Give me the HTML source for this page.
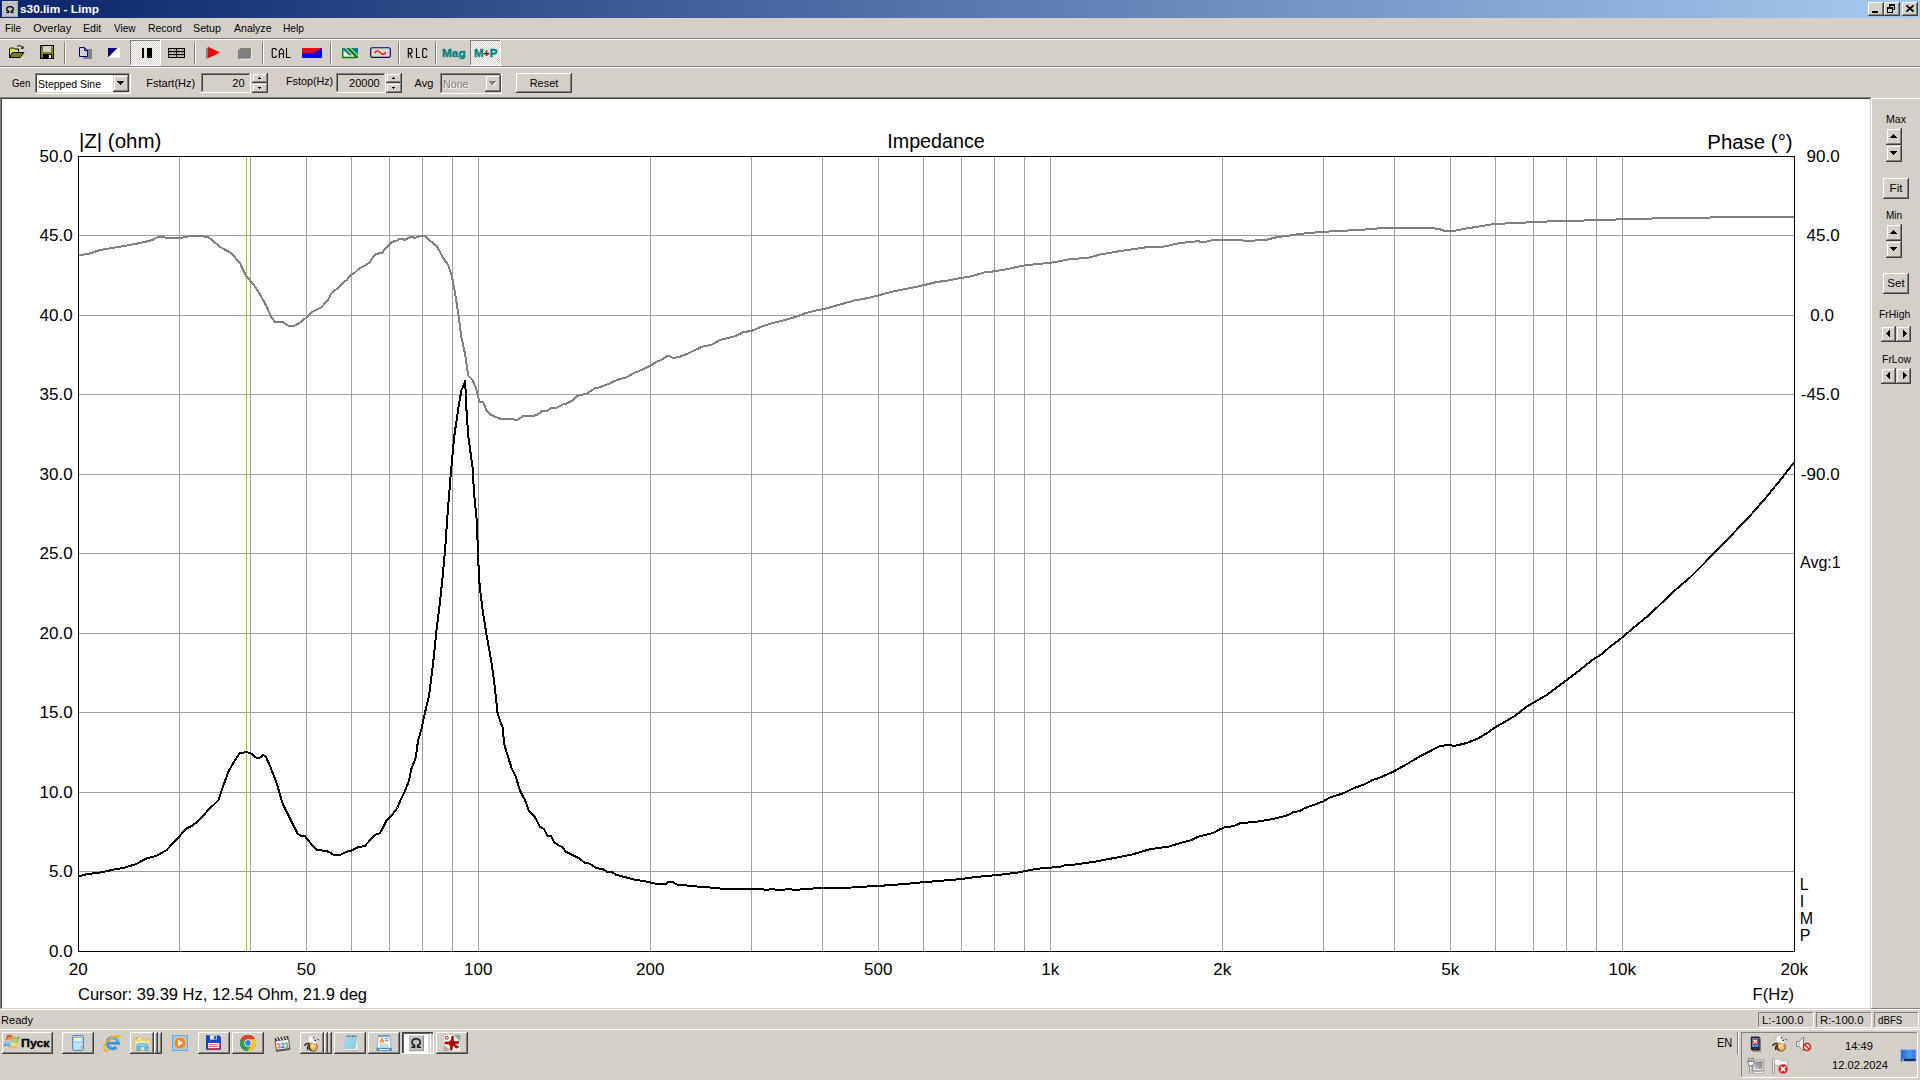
<!DOCTYPE html>
<html><head><meta charset="utf-8"><title>s30.lim - Limp</title>
<style>
html,body{margin:0;padding:0;}
body{width:1920px;height:1080px;overflow:hidden;background:#d4d0c8;position:relative;font-family:"Liberation Sans",sans-serif;}
.a{position:absolute;box-sizing:border-box;}
.t{position:absolute;white-space:pre;line-height:1;font-family:"Liberation Sans",sans-serif;}
svg{position:absolute;left:0;top:0;overflow:visible;}
</style></head>
<body>
<div class="a " style="left:0px;top:0px;width:1920px;height:18px;background:linear-gradient(to right,#0a246a,#a6caf0);"></div>
<div class="a " style="left:2px;top:1px;width:16px;height:16px;background:#c0c0c0;box-shadow:inset 1px 1px #d0d0d0,inset -1px -1px #a8a8a8;"><svg width="16" height="16" viewBox="0 0 16 16"><path d="M4.300 11.300h2.300v-1.200c-1.300-.5-1.900-1.200-1.900-2.200 0-1.400 1.400-2.300 3.300-2.300s3.300 .9 3.300 2.300c0 1-.6 1.700-1.900 2.200v1.200h2.300" fill="none" stroke="#000" stroke-width="1.350"/></svg></div>
<div class="a " style="left:1868px;top:2px;width:16px;height:14px;background:#d4d0c8;box-shadow:inset -1px -1px #404040,inset 1px 1px #fff,inset -2px -2px #808080,inset 2px 2px #d4d0c8;"><div class="a" style="left:4px;top:9px;width:6px;height:2px;background:#000"></div></div>
<div class="a " style="left:1884px;top:2px;width:16px;height:14px;background:#d4d0c8;box-shadow:inset -1px -1px #404040,inset 1px 1px #fff,inset -2px -2px #808080,inset 2px 2px #d4d0c8;"><div class="a" style="left:5px;top:2px;width:6px;height:2px;background:#000"></div><div class="a" style="left:5px;top:4px;width:1px;height:2px;background:#000"></div><div class="a" style="left:10px;top:4px;width:1px;height:4px;background:#000"></div><div class="a" style="left:9px;top:7px;width:2px;height:1px;background:#000"></div><div class="a" style="left:3px;top:5px;width:6px;height:2px;background:#000"></div><div class="a" style="left:3px;top:7px;width:1px;height:4px;background:#000"></div><div class="a" style="left:8px;top:7px;width:1px;height:4px;background:#000"></div><div class="a" style="left:3px;top:10px;width:6px;height:1px;background:#000"></div></div>
<div class="a " style="left:1902px;top:2px;width:16px;height:14px;background:#d4d0c8;box-shadow:inset -1px -1px #404040,inset 1px 1px #fff,inset -2px -2px #808080,inset 2px 2px #d4d0c8;"><svg width="16" height="14"><path d="M4.400 3.400l7.200 6.200M11.600 3.400l-7.200 6.200" stroke="#000" stroke-width="1.800"/></svg></div>
<div class="a " style="left:0px;top:38px;width:1920px;height:1px;background:#808080;"></div>
<div class="a " style="left:0px;top:39px;width:1920px;height:1px;background:#fff;"></div>
<div class="a " style="left:0px;top:66px;width:1920px;height:1px;background:#808080;"></div>
<div class="a " style="left:0px;top:67px;width:1920px;height:1px;background:#fff;"></div>
<div class="a " style="left:64px;top:42px;width:1px;height:22px;background:#808080;"></div>
<div class="a " style="left:65px;top:42px;width:1px;height:22px;background:#fff;"></div>
<div class="a " style="left:194px;top:42px;width:1px;height:22px;background:#808080;"></div>
<div class="a " style="left:195px;top:42px;width:1px;height:22px;background:#fff;"></div>
<div class="a " style="left:262px;top:42px;width:1px;height:22px;background:#808080;"></div>
<div class="a " style="left:263px;top:42px;width:1px;height:22px;background:#fff;"></div>
<div class="a " style="left:330px;top:42px;width:1px;height:22px;background:#808080;"></div>
<div class="a " style="left:331px;top:42px;width:1px;height:22px;background:#fff;"></div>
<div class="a " style="left:398px;top:42px;width:1px;height:22px;background:#808080;"></div>
<div class="a " style="left:399px;top:42px;width:1px;height:22px;background:#fff;"></div>
<div class="a " style="left:435px;top:42px;width:1px;height:22px;background:#808080;"></div>
<div class="a " style="left:436px;top:42px;width:1px;height:22px;background:#fff;"></div>
<svg class="a" style="left:8px;top:44px" width="18" height="16" viewBox="0 0 18 16" ><path d="M1.500 13.500v-8.500l1-1h3l1 1h4v2.500" fill="#e0e040" stroke="#000"/><path d="M2 6h8v2h-8z" fill="#c0f040"/><path d="M1.500 13.500l3-5h11.500l-4 5z" fill="#808000" stroke="#000"/><path d="M9 2.500c1.800-1.400 4.500-1.200 5.500 1.200" fill="none" stroke="#000"/><path d="M12.500 4.800h3v-3z" fill="#000"/></svg>
<svg class="a" style="left:40px;top:45px" width="15" height="15" viewBox="0 0 15 15" ><rect x=".5" y=".5" width="13" height="13" fill="#808000" stroke="#000"/><rect x="3" y="1" width="8" height="6" fill="#d4d0c8"/><rect x="3" y="9" width="9" height="4.500" fill="#000"/><rect x="9" y="10" width="2" height="3" fill="#e8e8e8"/><rect x="11.800" y="1.300" width="1.200" height="1.200" fill="#d4d0c8"/></svg>
<svg class="a" style="left:78px;top:46px" width="15" height="14" viewBox="0 0 15 14" ><rect x="5.300" y="3" width="8.700" height="10" fill="#808080"/><path d="M1.500 1.500h5l3 3v6h-8z" fill="#d4d0c8" stroke="#000080"/><path d="M6.500 1.500v3h3" fill="none" stroke="#000080"/></svg>
<svg class="a" style="left:108px;top:48px" width="12" height="10" viewBox="0 0 12 10" ><rect x="0" y="0" width="12" height="9.700" fill="#fff"/><path d="M0 0h9.500l-9.500 9.500z" fill="#000080"/></svg>
<div class="a " style="left:130px;top:40px;width:31px;height:26px;background-image:conic-gradient(#fff 25%,#d4d0c8 0 50%,#fff 0 75%,#d4d0c8 0);background-size:2px 2px;box-shadow:inset -1px -1px #fff,inset 1px 1px #808080;"></div>
<div class="a " style="left:142px;top:48px;width:2px;height:10px;background:#000"></div>
<div class="a " style="left:147px;top:48px;width:5px;height:10px;background:#000"></div>
<svg class="a" style="left:168px;top:48px" width="17" height="10" viewBox="0 0 17 10" ><rect x="0" y="0" width="17" height="10" fill="#000"/><g fill="#efe9d9"><rect x="1" y="1.300" width="7" height="1.500"/><rect x="9" y="1.300" width="7" height="1.500"/><rect x="1" y="4.300" width="7" height="1.500"/><rect x="9" y="4.300" width="7" height="1.500"/><rect x="1" y="7.300" width="7" height="1.500"/><rect x="9" y="7.300" width="7" height="1.500"/></g><g fill="#c8c2b0"><rect x="4" y="1" width="1" height="8"/><rect x="12" y="1" width="1" height="8"/></g><g fill="#000"><rect x="0" y="3" width="17" height="1"/><rect x="0" y="6" width="17" height="1"/></g></svg>
<svg class="a" style="left:205px;top:46px" width="17" height="14" viewBox="0 0 17 14" ><path d="M1 3l2-2v10.500l9-4.500v1l-9.500 4.500h-1.500z" fill="#808080"/><path d="M3 .8l12 5.700l-12 5.700z" fill="#f00"/></svg>
<svg class="a" style="left:237px;top:47px" width="15" height="14" viewBox="0 0 15 14" ><path d="M4.200 2.200h10.400v9.400l-1 1h-10.400v-9z" fill="#fff"/><path d="M3.500 1h10.500v9.500l-1.200 1.200h-11.800v-8.500z" fill="#808080"/></svg>
<svg class="a" style="left:271px;top:47px" width="22" height="13" viewBox="0 0 22 13" ><g fill="none" stroke="#000" stroke-width="1.100" stroke-linejoin="miter"><path d="M5.200 3.500v-1l-1-1h-2l-1 1v7l1 1h2l1-1v-1"/><path d="M8.300 11v-7l2.100-2.500l2.100 2.500v7M8.300 6.800h4.200"/><path d="M15.500 1v9.500h4"/></g></svg>
<svg class="a" style="left:407px;top:47px" width="22" height="13" viewBox="0 0 22 13" ><g fill="none" stroke="#000" stroke-width="1.100" stroke-linejoin="miter"><path d="M1.300 11v-9.500h2.700l1 1v2.600l-1 1h-2.700M2.900 6.600l2.300 4.400"/><path d="M9.500 1v9.500h3.600"/><path d="M19.700 3.500v-1l-1-1h-2l-1 1v7l1 1h2l1-1v-1"/></g></svg>
<svg class="a" style="left:302px;top:48px" width="20" height="10" viewBox="0 0 20 10" ><rect x="0" y="0" width="20" height="10" fill="#00f"/><path d="M0 0h20l-8.500 5h-11.500z" fill="#f00"/></svg>
<svg class="a" style="left:342px;top:48px" width="17" height="11" viewBox="0 0 17 11" ><path d="M0 0v10h16z" fill="#f6e4e4"/><path d="M9 0h7v7z" fill="#008080"/><path d="M0 0h2.600l7.400 7.300h-2.700l-7.300-6.300z" fill="#008080"/><path d="M4.300 0h3l8.700 8.500v1.500h-2z" fill="#008000"/><path d="M.7 1.500v8h13.500" fill="none" stroke="#008000" stroke-width="1.400"/></svg>
<svg class="a" style="left:369px;top:46px" width="23" height="13" viewBox="0 0 23 13" ><rect x="1.700" y="1.700" width="19.600" height="9.600" rx="1.500" fill="#ddd8c8" stroke="#000080" stroke-width="1.150"/><path d="M6 7.200c.8-3 3.200-3 5.200-.6s4.600 2.300 5.500-.6" fill="none" stroke="#f00" stroke-width="1.400"/></svg>
<div class="a " style="left:470px;top:40px;width:31px;height:26px;background-image:conic-gradient(#fff 25%,#d4d0c8 0 50%,#fff 0 75%,#d4d0c8 0);background-size:2px 2px;box-shadow:inset -1px -1px #fff,inset 1px 1px #808080;"></div>
<div class="a " style="left:35px;top:73px;width:96px;height:21px;background:#fff;box-shadow:inset -1px -1px #fff,inset 1px 1px #808080,inset -2px -2px #d4d0c8,inset 2px 2px #404040;"></div>
<div class="a " style="left:113px;top:75px;width:16px;height:17px;background:#d4d0c8;box-shadow:inset -1px -1px #404040,inset 1px 1px #d4d0c8,inset -2px -2px #808080,inset 2px 2px #fff;"><div class="a" style="left:4px;top:6px;width:7px;height:1px;background:#000"></div><div class="a" style="left:5px;top:7px;width:5px;height:1px;background:#000"></div><div class="a" style="left:6px;top:8px;width:3px;height:1px;background:#000"></div><div class="a" style="left:7px;top:9px;width:1px;height:1px;background:#000"></div></div>
<div class="a " style="left:201px;top:73px;width:50px;height:20px;background:#d4d0c8;box-shadow:inset -1px -1px #fff,inset 1px 1px #808080,inset -2px -2px #d4d0c8,inset 2px 2px #404040;"></div>
<div class="a " style="left:252px;top:73px;width:16px;height:10px;background:#d4d0c8;box-shadow:inset -1px -1px #404040,inset 1px 1px #d4d0c8,inset -2px -2px #808080,inset 2px 2px #fff;"><div class="a" style="left:7px;top:4px;width:1px;height:1px;background:#000"></div><div class="a" style="left:6px;top:5px;width:3px;height:1px;background:#000"></div></div>
<div class="a " style="left:252px;top:83px;width:16px;height:10px;background:#d4d0c8;box-shadow:inset -1px -1px #404040,inset 1px 1px #d4d0c8,inset -2px -2px #808080,inset 2px 2px #fff;"><div class="a" style="left:6px;top:4px;width:3px;height:1px;background:#000"></div><div class="a" style="left:7px;top:5px;width:1px;height:1px;background:#000"></div></div>
<div class="a " style="left:336px;top:73px;width:50px;height:20px;background:#d4d0c8;box-shadow:inset -1px -1px #fff,inset 1px 1px #808080,inset -2px -2px #d4d0c8,inset 2px 2px #404040;"></div>
<div class="a " style="left:386px;top:73px;width:16px;height:10px;background:#d4d0c8;box-shadow:inset -1px -1px #404040,inset 1px 1px #d4d0c8,inset -2px -2px #808080,inset 2px 2px #fff;"><div class="a" style="left:7px;top:4px;width:1px;height:1px;background:#000"></div><div class="a" style="left:6px;top:5px;width:3px;height:1px;background:#000"></div></div>
<div class="a " style="left:386px;top:83px;width:16px;height:10px;background:#d4d0c8;box-shadow:inset -1px -1px #404040,inset 1px 1px #d4d0c8,inset -2px -2px #808080,inset 2px 2px #fff;"><div class="a" style="left:6px;top:4px;width:3px;height:1px;background:#000"></div><div class="a" style="left:7px;top:5px;width:1px;height:1px;background:#000"></div></div>
<div class="a " style="left:440px;top:73px;width:62px;height:21px;background:#d4d0c8;box-shadow:inset -1px -1px #fff,inset 1px 1px #808080,inset -2px -2px #d4d0c8,inset 2px 2px #404040;"></div>
<div class="a " style="left:485px;top:75px;width:16px;height:17px;background:#d4d0c8;box-shadow:inset -1px -1px #404040,inset 1px 1px #d4d0c8,inset -2px -2px #808080,inset 2px 2px #fff;"><div class="a" style="left:5px;top:7px;width:7px;height:1px;background:#fff"></div><div class="a" style="left:6px;top:8px;width:5px;height:1px;background:#fff"></div><div class="a" style="left:7px;top:9px;width:3px;height:1px;background:#fff"></div><div class="a" style="left:8px;top:10px;width:1px;height:1px;background:#fff"></div><div class="a" style="left:4px;top:6px;width:7px;height:1px;background:#808080"></div><div class="a" style="left:5px;top:7px;width:5px;height:1px;background:#808080"></div><div class="a" style="left:6px;top:8px;width:3px;height:1px;background:#808080"></div><div class="a" style="left:7px;top:9px;width:1px;height:1px;background:#808080"></div></div>
<div class="a " style="left:516px;top:73px;width:56px;height:20px;background:#d4d0c8;box-shadow:inset -1px -1px #404040,inset 1px 1px #fff,inset -2px -2px #808080,inset 2px 2px #d4d0c8;"></div>
<div class="a " style="left:0px;top:97px;width:1871px;height:1px;background:#808080;"></div>
<div class="a " style="left:0px;top:98px;width:1871px;height:1px;background:#404040;"></div>
<div class="a " style="left:0px;top:97px;width:1px;height:912px;background:#808080;"></div>
<div class="a " style="left:1px;top:98px;width:1px;height:910px;background:#404040;"></div>
<div class="a " style="left:2px;top:99px;width:1868px;height:909px;background:#fff;"></div>
<div class="a " style="left:1px;top:1008px;width:1870px;height:1px;background:#d4d0c8;"></div>
<div class="a " style="left:0px;top:1009px;width:1920px;height:1px;background:#fff;"></div>
<div class="a " style="left:1870px;top:98px;width:50px;height:911px;background:#d4d0c8;"></div>
<div class="a " style="left:1871px;top:98px;width:49px;height:1px;background:#fff;"></div>
<div class="a " style="left:1871px;top:98px;width:1px;height:910px;background:#fff;"></div>
<div class="a " style="left:1871px;top:1008px;width:49px;height:1px;background:#808080;"></div>
<div class="a " style="left:1886px;top:128px;width:16px;height:17px;background:#d4d0c8;box-shadow:inset -1px -1px #404040,inset 1px 1px #d4d0c8,inset -2px -2px #808080,inset 2px 2px #fff;"><div class="a" style="left:7px;top:6px;width:1px;height:1px;background:#000"></div><div class="a" style="left:6px;top:7px;width:3px;height:1px;background:#000"></div><div class="a" style="left:5px;top:8px;width:5px;height:1px;background:#000"></div><div class="a" style="left:4px;top:9px;width:7px;height:1px;background:#000"></div></div>
<div class="a " style="left:1886px;top:145px;width:16px;height:17px;background:#d4d0c8;box-shadow:inset -1px -1px #404040,inset 1px 1px #d4d0c8,inset -2px -2px #808080,inset 2px 2px #fff;"><div class="a" style="left:4px;top:6px;width:7px;height:1px;background:#000"></div><div class="a" style="left:5px;top:7px;width:5px;height:1px;background:#000"></div><div class="a" style="left:6px;top:8px;width:3px;height:1px;background:#000"></div><div class="a" style="left:7px;top:9px;width:1px;height:1px;background:#000"></div></div>
<div class="a " style="left:1883px;top:178px;width:26px;height:21px;background:#d4d0c8;box-shadow:inset -1px -1px #404040,inset 1px 1px #fff,inset -2px -2px #808080,inset 2px 2px #d4d0c8;"></div>
<div class="a " style="left:1886px;top:224px;width:16px;height:17px;background:#d4d0c8;box-shadow:inset -1px -1px #404040,inset 1px 1px #d4d0c8,inset -2px -2px #808080,inset 2px 2px #fff;"><div class="a" style="left:7px;top:6px;width:1px;height:1px;background:#000"></div><div class="a" style="left:6px;top:7px;width:3px;height:1px;background:#000"></div><div class="a" style="left:5px;top:8px;width:5px;height:1px;background:#000"></div><div class="a" style="left:4px;top:9px;width:7px;height:1px;background:#000"></div></div>
<div class="a " style="left:1886px;top:241px;width:16px;height:17px;background:#d4d0c8;box-shadow:inset -1px -1px #404040,inset 1px 1px #d4d0c8,inset -2px -2px #808080,inset 2px 2px #fff;"><div class="a" style="left:4px;top:6px;width:7px;height:1px;background:#000"></div><div class="a" style="left:5px;top:7px;width:5px;height:1px;background:#000"></div><div class="a" style="left:6px;top:8px;width:3px;height:1px;background:#000"></div><div class="a" style="left:7px;top:9px;width:1px;height:1px;background:#000"></div></div>
<div class="a " style="left:1883px;top:273px;width:26px;height:21px;background:#d4d0c8;box-shadow:inset -1px -1px #404040,inset 1px 1px #fff,inset -2px -2px #808080,inset 2px 2px #d4d0c8;"></div>
<div class="a " style="left:1881px;top:326px;width:15px;height:16px;background:#d4d0c8;box-shadow:inset -1px -1px #404040,inset 1px 1px #d4d0c8,inset -2px -2px #808080,inset 2px 2px #fff;"><div class="a" style="left:5px;top:7px;width:1px;height:1px;background:#000"></div><div class="a" style="left:6px;top:6px;width:1px;height:3px;background:#000"></div><div class="a" style="left:7px;top:5px;width:1px;height:5px;background:#000"></div><div class="a" style="left:8px;top:4px;width:1px;height:7px;background:#000"></div></div>
<div class="a " style="left:1896px;top:326px;width:15px;height:16px;background:#d4d0c8;box-shadow:inset -1px -1px #404040,inset 1px 1px #d4d0c8,inset -2px -2px #808080,inset 2px 2px #fff;"><div class="a" style="left:7px;top:4px;width:1px;height:7px;background:#000"></div><div class="a" style="left:8px;top:5px;width:1px;height:5px;background:#000"></div><div class="a" style="left:9px;top:6px;width:1px;height:3px;background:#000"></div><div class="a" style="left:10px;top:7px;width:1px;height:1px;background:#000"></div></div>
<div class="a " style="left:1881px;top:368px;width:15px;height:16px;background:#d4d0c8;box-shadow:inset -1px -1px #404040,inset 1px 1px #d4d0c8,inset -2px -2px #808080,inset 2px 2px #fff;"><div class="a" style="left:5px;top:7px;width:1px;height:1px;background:#000"></div><div class="a" style="left:6px;top:6px;width:1px;height:3px;background:#000"></div><div class="a" style="left:7px;top:5px;width:1px;height:5px;background:#000"></div><div class="a" style="left:8px;top:4px;width:1px;height:7px;background:#000"></div></div>
<div class="a " style="left:1896px;top:368px;width:15px;height:16px;background:#d4d0c8;box-shadow:inset -1px -1px #404040,inset 1px 1px #d4d0c8,inset -2px -2px #808080,inset 2px 2px #fff;"><div class="a" style="left:7px;top:4px;width:1px;height:7px;background:#000"></div><div class="a" style="left:8px;top:5px;width:1px;height:5px;background:#000"></div><div class="a" style="left:9px;top:6px;width:1px;height:3px;background:#000"></div><div class="a" style="left:10px;top:7px;width:1px;height:1px;background:#000"></div></div>
<div class="a " style="left:1758px;top:1012px;width:56px;height:16px;box-shadow:inset -1px -1px #fff,inset 1px 1px #808080;"></div>
<div class="a " style="left:1816px;top:1012px;width:56px;height:16px;box-shadow:inset -1px -1px #fff,inset 1px 1px #808080;"></div>
<div class="a " style="left:1874px;top:1012px;width:45px;height:16px;box-shadow:inset -1px -1px #fff,inset 1px 1px #808080;"></div>
<svg width="1920" height="1080" viewBox="0 0 1920 1080"><g fill="#a0a0a0" shape-rendering="crispEdges"><rect x="179" y="156" width="1" height="795"/><rect x="250" y="156" width="1" height="795"/><rect x="306" y="156" width="1" height="795"/><rect x="351" y="156" width="1" height="795"/><rect x="389" y="156" width="1" height="795"/><rect x="422" y="156" width="1" height="795"/><rect x="452" y="156" width="1" height="795"/><rect x="478" y="156" width="1" height="795"/><rect x="650" y="156" width="1" height="795"/><rect x="751" y="156" width="1" height="795"/><rect x="822" y="156" width="1" height="795"/><rect x="878" y="156" width="1" height="795"/><rect x="923" y="156" width="1" height="795"/><rect x="961" y="156" width="1" height="795"/><rect x="994" y="156" width="1" height="795"/><rect x="1024" y="156" width="1" height="795"/><rect x="1050" y="156" width="1" height="795"/><rect x="1222" y="156" width="1" height="795"/><rect x="1323" y="156" width="1" height="795"/><rect x="1394" y="156" width="1" height="795"/><rect x="1450" y="156" width="1" height="795"/><rect x="1495" y="156" width="1" height="795"/><rect x="1533" y="156" width="1" height="795"/><rect x="1566" y="156" width="1" height="795"/><rect x="1596" y="156" width="1" height="795"/><rect x="1622" y="156" width="1" height="795"/><rect x="78" y="235" width="1716" height="1"/><rect x="78" y="315" width="1716" height="1"/><rect x="78" y="394" width="1716" height="1"/><rect x="78" y="474" width="1716" height="1"/><rect x="78" y="553" width="1716" height="1"/><rect x="78" y="633" width="1716" height="1"/><rect x="78" y="712" width="1716" height="1"/><rect x="78" y="792" width="1716" height="1"/><rect x="78" y="871" width="1716" height="1"/></g><rect x="246" y="156" width="1" height="795" fill="#c0c000" shape-rendering="crispEdges"/><polyline points="78.5,255.2 88.8,253.8 100.0,250.0 111.2,248.1 127.5,245.4 141.2,242.8 152.5,240.0 158.1,236.9 163.8,236.9 166.2,237.9 181.2,237.9 190.0,236.2 202.5,236.0 208.8,237.5 220.0,246.9 231.2,253.1 240.0,263.1 246.2,276.2 253.8,285.0 260.0,294.4 266.2,305.6 271.2,316.9 275.0,321.9 282.5,321.9 288.1,325.6 295.0,325.6 300.0,322.5 306.9,316.9 312.5,311.9 321.2,307.5 328.1,300.0 331.9,292.5 336.2,289.4 344.4,281.2 346.9,280.0 350.0,275.6 354.4,273.1 358.8,268.8 363.8,266.2 369.4,262.5 374.4,255.0 377.5,253.8 382.5,252.5 386.2,247.5 391.9,241.9 396.9,240.6 400.0,238.8 405.0,239.8 410.6,236.9 415.0,237.8 420.0,236.0 425.0,236.0 430.6,241.2 436.9,246.2 442.5,256.9 448.1,265.0 451.9,276.2 455.0,292.5 458.1,312.5 461.2,336.2 465.0,353.8 468.1,375.6 472.5,380.0 476.2,388.8 479.4,401.9 483.1,401.9 486.2,410.0 491.2,415.0 500.0,418.8 512.5,418.8 515.0,420.0 517.5,419.8 523.1,416.2 532.5,416.0 537.5,414.8 541.9,411.0 546.9,410.8 551.2,407.9 556.2,407.8 563.1,404.4 566.9,403.4 572.5,400.4 576.9,396.0 587.5,393.4 595.0,388.1 599.4,387.5 605.0,385.0 609.4,383.8 614.4,381.0 620.0,379.0 626.2,377.5 633.1,373.4 640.0,370.6 650.6,365.6 656.2,361.9 661.2,360.0 668.1,355.6 672.5,357.8 675.0,357.8 681.7,356.2 690.0,352.5 695.0,350.0 702.5,346.7 711.7,344.7 720.0,340.0 735.0,336.3 743.3,332.2 751.7,330.8 760.8,327.0 770.0,323.8 785.0,320.0 797.5,316.3 805.8,313.0 818.3,310.0 825.0,308.8 838.3,305.0 855.0,300.3 866.7,298.3 878.3,295.5 886.7,293.0 900.0,290.0 913.3,287.5 923.3,285.3 936.7,282.0 948.3,280.5 961.7,277.8 971.7,276.3 985.0,272.2 990.0,271.9 1004.2,269.7 1025.0,265.3 1050.8,262.8 1070.0,259.2 1088.3,257.8 1100.0,254.5 1121.7,250.8 1146.7,247.2 1163.3,246.7 1180.0,243.0 1198.3,241.2 1201.7,242.0 1205.8,241.7 1213.3,240.0 1241.7,240.0 1244.2,241.2 1252.5,241.2 1256.7,240.0 1266.7,239.7 1276.7,237.2 1288.3,235.8 1300.0,233.9 1306.7,233.3 1320.0,232.0 1335.0,231.2 1351.7,230.3 1368.3,229.3 1383.3,228.0 1428.3,227.8 1438.3,228.8 1445.0,231.0 1453.3,231.0 1466.7,228.3 1478.3,226.7 1495.0,223.8 1511.7,223.3 1531.7,222.2 1551.7,221.3 1583.3,220.7 1586.7,220.0 1610.0,219.8 1622.5,219.2 1673.3,218.0 1733.3,217.2 1794.0,216.7" fill="none" stroke="#808080" stroke-width="2" stroke-linejoin="round" stroke-linecap="butt" shape-rendering="crispEdges"/><polyline points="78.7,876.3 86.7,874.2 100.0,872.5 113.3,869.7 125.0,867.5 135.8,864.2 146.7,858.3 156.7,855.8 166.7,850.0 176.7,839.2 186.7,828.3 193.3,825.0 200.0,819.2 208.3,810.0 218.3,800.3 223.3,785.8 228.3,771.7 235.0,760.0 240.0,753.0 246.7,752.2 250.8,753.3 256.7,758.0 260.0,757.5 263.3,755.0 265.8,756.7 270.0,765.8 276.7,783.3 282.5,803.3 290.0,818.3 297.5,833.3 300.8,835.8 305.0,836.3 310.0,842.5 316.7,850.0 325.0,850.8 329.2,852.0 333.3,854.7 340.8,854.7 346.7,851.7 351.7,850.5 358.3,847.2 365.0,845.8 375.0,834.7 380.0,833.3 386.7,820.0 390.8,816.7 397.5,807.5 400.8,799.2 405.0,790.8 408.7,781.7 411.3,769.2 415.8,757.5 418.0,740.8 421.7,728.3 423.3,720.0 429.2,695.0 433.3,661.7 436.7,628.3 440.0,601.7 442.5,578.3 445.0,551.0 447.5,515.0 450.8,473.3 454.2,436.7 458.3,408.3 461.3,390.8 465.3,380.8 465.8,400.0 468.3,436.7 472.5,466.7 474.2,495.0 476.7,520.0 477.8,547.0 478.3,561.7 479.7,586.7 483.3,615.0 486.7,635.8 490.8,658.3 494.2,681.7 497.5,712.5 500.4,722.0 502.5,726.7 504.2,744.2 507.5,755.0 511.7,768.3 515.8,776.7 520.0,790.8 525.0,800.0 528.8,810.8 534.2,815.8 540.0,826.7 544.2,829.2 547.2,835.5 550.8,835.8 554.2,842.5 562.5,847.5 565.8,851.7 580.0,858.7 584.2,862.5 590.0,863.7 596.7,868.3 602.5,868.8 606.7,871.7 611.7,872.0 615.8,874.7 623.3,876.7 635.0,879.7 646.7,881.7 656.7,883.8 665.8,883.8 668.3,882.0 672.5,882.0 676.7,884.5 685.0,885.3 693.3,886.3 705.0,887.0 723.3,888.8 761.7,889.2 766.7,890.0 771.7,888.8 776.7,890.0 790.0,889.2 795.0,890.0 806.7,888.8 823.3,888.0 851.7,887.5 871.7,886.2 888.3,885.3 906.7,883.8 923.3,882.2 940.0,880.8 960.0,879.2 978.3,876.7 995.0,875.3 1005.0,874.2 1020.0,872.2 1036.7,868.8 1060.8,866.7 1065.0,865.0 1073.3,864.7 1095.0,861.7 1116.7,857.5 1133.3,854.2 1150.0,849.2 1168.3,846.7 1183.3,842.2 1191.7,840.0 1198.3,836.7 1213.3,833.0 1218.3,830.0 1225.0,827.2 1233.3,826.3 1240.0,823.3 1256.7,821.7 1270.0,819.5 1281.7,817.0 1288.3,815.0 1293.3,812.2 1300.0,810.8 1305.0,808.0 1312.0,805.5 1322.5,801.7 1330.0,797.5 1343.3,793.3 1354.2,788.0 1365.0,784.2 1372.5,780.0 1378.3,778.3 1393.3,771.7 1406.7,764.2 1420.0,756.3 1430.0,751.3 1438.3,746.7 1446.7,745.0 1455.0,745.8 1466.7,743.0 1478.3,738.3 1486.7,733.3 1495.0,727.5 1505.0,721.7 1515.0,715.8 1526.7,706.7 1536.7,700.8 1546.7,695.0 1556.7,687.5 1566.7,680.0 1576.7,672.5 1593.3,659.2 1601.7,654.2 1610.0,646.7 1619.2,640.0 1630.8,630.0 1650.0,614.2 1673.3,591.7 1690.0,577.5 1705.0,562.5 1716.7,550.0 1733.3,533.3 1750.0,515.8 1766.7,496.7 1781.7,478.3 1794.0,462.5" fill="none" stroke="#000" stroke-width="2" stroke-linejoin="round" stroke-linecap="butt" shape-rendering="crispEdges"/><g fill="#000" shape-rendering="crispEdges"><rect x="78" y="156" width="1717" height="1"/><rect x="78" y="951" width="1717" height="1"/><rect x="78" y="156" width="1" height="796"/><rect x="1794" y="156" width="1" height="796"/></g></svg>
<div class="a " style="left:0px;top:1029px;width:1920px;height:1px;background:#fff;"></div>
<div class="a " style="left:2px;top:1032px;width:51px;height:22px;background:#d4d0c8;box-shadow:inset -1px -1px #404040,inset 1px 1px #fff,inset -2px -2px #808080,inset 2px 2px #d4d0c8;"></div>
<svg class="a" style="left:4px;top:1034px" width="17" height="16" viewBox="0 0 17 16" ><defs><radialGradient id="fr" cx=".6" cy=".7" r=".8"><stop offset="0" stop-color="#ffb040"/><stop offset="1" stop-color="#d83018"/></radialGradient><radialGradient id="fg" cx=".4" cy=".6" r=".8"><stop offset="0" stop-color="#c8e878"/><stop offset="1" stop-color="#489820"/></radialGradient><radialGradient id="fb" cx=".6" cy=".3" r=".8"><stop offset="0" stop-color="#b8dcf8"/><stop offset="1" stop-color="#2870c8"/></radialGradient><radialGradient id="fy" cx=".4" cy=".3" r=".8"><stop offset="0" stop-color="#fff080"/><stop offset="1" stop-color="#f0a010"/></radialGradient></defs><path d="M2.800 1.600c2.200-1.200 4.200-.9 5.900.4l-1.400 4.900c-1.700-1.200-3.700-1.500-5.900-.3z" fill="url(#fr)"/><path d="M9.700 2.600c1.800 1.200 3.800 1.300 6 .0l-1.400 4.900c-2.200 1.300-4.200 1.200-6-.0z" fill="url(#fg)"/><path d="M1.100 7.700c2.200-1.200 4.200-.9 5.900.4l-1.400 4.800c-1.700-1.300-3.700-1.600-5.900-.4z" fill="url(#fb)"/><path d="M8 8.700c1.800 1.200 3.800 1.300 6 .0l-1.400 4.800c-2.200 1.300-4.200 1.200-6-.0z" fill="url(#fy)"/></svg>
<div class="a " style="left:62px;top:1032px;width:32px;height:22px;background:#d4d0c8;box-shadow:inset -1px -1px #404040,inset 1px 1px #fff,inset -2px -2px #808080,inset 2px 2px #d4d0c8;"></div>
<div class="a " style="left:154px;top:1032px;width:8px;height:22px;background:#d4d0c8;box-shadow:inset -1px -1px #404040,inset 1px 1px #fff,inset -2px -2px #808080,inset 2px 2px #d4d0c8;"></div>
<div class="a " style="left:154px;top:1032px;width:4px;height:22px;background:#d4d0c8;box-shadow:inset -1px -1px #404040,inset 1px 1px #fff,inset -2px -2px #808080,inset 2px 2px #d4d0c8;"></div>
<div class="a " style="left:130px;top:1032px;width:24px;height:22px;background:#d4d0c8;box-shadow:inset -1px -1px #404040,inset 1px 1px #fff,inset -2px -2px #808080,inset 2px 2px #d4d0c8;"></div>
<div class="a " style="left:198px;top:1032px;width:32px;height:22px;background:#d4d0c8;box-shadow:inset -1px -1px #404040,inset 1px 1px #fff,inset -2px -2px #808080,inset 2px 2px #d4d0c8;"></div>
<div class="a " style="left:232px;top:1032px;width:32px;height:22px;background:#d4d0c8;box-shadow:inset -1px -1px #404040,inset 1px 1px #fff,inset -2px -2px #808080,inset 2px 2px #d4d0c8;"></div>
<div class="a " style="left:324px;top:1032px;width:8px;height:22px;background:#d4d0c8;box-shadow:inset -1px -1px #404040,inset 1px 1px #fff,inset -2px -2px #808080,inset 2px 2px #d4d0c8;"></div>
<div class="a " style="left:324px;top:1032px;width:4px;height:22px;background:#d4d0c8;box-shadow:inset -1px -1px #404040,inset 1px 1px #fff,inset -2px -2px #808080,inset 2px 2px #d4d0c8;"></div>
<div class="a " style="left:300px;top:1032px;width:24px;height:22px;background:#d4d0c8;box-shadow:inset -1px -1px #404040,inset 1px 1px #fff,inset -2px -2px #808080,inset 2px 2px #d4d0c8;"></div>
<div class="a " style="left:334px;top:1032px;width:32px;height:22px;background:#d4d0c8;box-shadow:inset -1px -1px #404040,inset 1px 1px #fff,inset -2px -2px #808080,inset 2px 2px #d4d0c8;"></div>
<div class="a " style="left:368px;top:1032px;width:32px;height:22px;background:#d4d0c8;box-shadow:inset -1px -1px #404040,inset 1px 1px #fff,inset -2px -2px #808080,inset 2px 2px #d4d0c8;"></div>
<div class="a " style="left:436px;top:1032px;width:32px;height:22px;background:#d4d0c8;box-shadow:inset -1px -1px #404040,inset 1px 1px #fff,inset -2px -2px #808080,inset 2px 2px #d4d0c8;"></div>
<div class="a " style="left:402px;top:1032px;width:32px;height:22px;background:#fff;box-shadow:inset -1px -1px #fff,inset 1px 1px #404040,inset 2px 2px #606060;"></div>
<div class="a " style="left:429px;top:1034px;width:5px;height:19px;background:#d4d0c8;"></div>
<div class="a " style="left:430px;top:1033px;width:1px;height:20px;background:#fff;"></div>
<div class="a " style="left:433px;top:1033px;width:1px;height:21px;background:#fff;"></div>
<div class="a " style="left:428px;top:1034px;width:1px;height:19px;background:#e8e4dc;"></div>
<div class="a " style="left:430px;top:1032px;width:3px;height:1px;background:#404040;"></div>
<div class="a " style="left:431px;top:1033px;width:2px;height:1px;background:#606060;"></div>
<svg class="a" style="left:72px;top:1035px" width="12" height="16" viewBox="0 0 12 16" ><rect x=".5" y=".5" width="11" height="15" rx="1.200" fill="#a8d4f8" stroke="#4c90d4"/><rect x="2" y="2.700" width="8" height="3.800" fill="#e8f4ff" stroke="#88bcec" stroke-width=".5"/><rect x="2" y="2" width="8" height=".9" fill="#f8a030"/><g fill="#f4faff"><rect x="2.200" y="8.400" width="1.200" height="1.200"/><rect x="4.300" y="8.400" width="1.200" height="1.200"/><rect x="6.400" y="8.400" width="1.200" height="1.200"/><rect x="8.500" y="8.400" width="1.200" height="1.200"/><rect x="3.200" y="10.500" width="1.200" height="1.200"/><rect x="5.300" y="10.500" width="1.200" height="1.200"/><rect x="7.400" y="10.500" width="1.200" height="1.200"/><rect x="3.200" y="12.600" width="1.200" height="1.200"/><rect x="5.300" y="12.600" width="1.200" height="1.200"/><rect x="7.400" y="12.600" width="1.200" height="1.200"/></g><rect x="9" y="11" width="1.200" height="3" fill="#f89020"/></svg>
<svg class="a" style="left:103px;top:1034px" width="18" height="18" viewBox="0 0 18 18" ><defs><linearGradient id="ieg" x1="0" y1="0" x2="0" y2="1"><stop offset="0" stop-color="#58b4f0"/><stop offset=".5" stop-color="#2890e0"/><stop offset="1" stop-color="#3ca0e8"/></linearGradient></defs><circle cx="9.600" cy="9.200" r="5.500" fill="none" stroke="url(#ieg)" stroke-width="3.300" stroke-dasharray="30.700 3.860" transform="rotate(47 9.600 9.200)"/><rect x="4.200" y="8.100" width="12.400" height="2.400" fill="#2c94e4"/><path d="M2.300 16.700C-.8 14 2 8 8 4.200C12 1.600 16.600 .8 17 3.200" fill="none" stroke="#f4b400" stroke-width="1.700" stroke-linecap="round"/><path d="M2.300 16.700c1 .6 2.200 .4 3-.1" fill="none" stroke="#f0a800" stroke-width="1.300" stroke-linecap="round"/></svg>
<svg class="a" style="left:134px;top:1036px" width="17" height="16" viewBox="0 0 17 16" ><path d="M.8 2.300c0-.5.400-.9.900-.9h4.300l1 1.600h8.200c.4 0 .8.400.8.800v9.400c0 .5-.4.900-.9.900h-13.400c-.5 0-.9-.4-.9-.9z" fill="#f0d47c" stroke="#d8b850" stroke-width=".7"/><rect x="2" y="1.900" width="1.500" height="1" fill="#38c020"/><rect x="3.800" y="1.900" width="3" height="1" fill="#fff"/><path d="M1.200 5h14.400v8.600h-14.400z" fill="#f8e8a8"/><path d="M2.700 14.600v-5.300c0-1 .6-1.600 1.500-1.600h8.600c.9 0 1.500.6 1.500 1.600v5.300h-3.600v-3c0-.5-.3-.8-.8-.8h-2.800c-.5 0-.8.300-.8.800v3z" fill="#58b8f0" stroke="#48a0e0" stroke-width=".5"/><path d="M3.500 8.500h10v1.500h-10z" fill="#a8e0fc" opacity=".7"/></svg>
<svg class="a" style="left:172px;top:1035px" width="16" height="16" viewBox="0 0 16 16" ><rect x=".5" y=".5" width="15" height="15" fill="#9cccf4" stroke="#68a8e4"/><circle cx="8" cy="8" r="5.800" fill="#f48a18"/><circle cx="8" cy="8" r="5.800" fill="none" stroke="#fcb868" stroke-width=".8"/><path d="M6 4.800l5 3.200l-5 3.200z" fill="#fff"/></svg>
<svg class="a" style="left:206px;top:1035px" width="16" height="16" viewBox="0 0 16 16" ><defs><linearGradient id="shg" x1="0" y1="0" x2="1" y2="0"><stop offset="0" stop-color="#f8f8f8"/><stop offset="1" stop-color="#b8bcc8"/></linearGradient></defs><path d="M.3 .3h12.700l2 2v12.400h-14.700z" fill="#1848c8"/><path d="M.3 .3h1.200v14.400h-1.200z" fill="#1038a8"/><rect x="4" y=".3" width="7" height="4.300" fill="url(#shg)"/><rect x="8.300" y="1.200" width="1.700" height="2.800" fill="#1840c0"/><rect x="2" y="8" width="11.300" height="5.300" fill="#fff"/><g fill="#e03848"><rect x="3" y="9.300" width="9.300" height=".8"/><rect x="3" y="11.100" width="9.300" height=".8"/></g><rect x="2" y="13.300" width="11.300" height="1.500" fill="#c02838"/></svg>
<svg class="a" style="left:240px;top:1035px" width="16" height="16" viewBox="0 0 16 16" ><circle cx="8" cy="8" r="8" fill="#e04030"/><path d="M8 8L1.070 4a8 8 0 0 0 6.930 12z" fill="#2ca048"/><path d="M8 8L8 16a8 8 0 0 0 6.930-12z" fill="#f8c818"/><path d="M8 8L14.930 4a8 8 0 0 0 -13.860 0z" fill="#e04030"/><path d="M8 8l-3.300 1.900L1.070 4a8 8 0 0 0 6.930 12l3.400-6z" fill="#2ca048"/><path d="M8 16a8 8 0 0 0 6.930-12h-6.930l3.300 6z" fill="#f8c818"/><path d="M1.070 4a8 8 0 0 1 13.860 0h-6.930a4 4 0 0 0 -3.460 2z" fill="#e04030"/><circle cx="8" cy="8" r="3.700" fill="#fff"/><circle cx="8" cy="8" r="2.900" fill="#3880f0"/></svg>
<svg class="a" style="left:274px;top:1035px" width="17" height="17" viewBox="0 0 17 17" ><g transform="rotate(-8 8 8)"><rect x="1.500" y="5" width="13.500" height="10.500" fill="#f4f4f4" stroke="#404040" stroke-width=".8"/><rect x="1.500" y="2" width="13.500" height="3" fill="#303030"/><path d="M3 2l1.500 3M6 2l1.500 3M9 2l1.500 3M12 2l1.500 3" stroke="#fff" stroke-width="1.200"/><text x="2.300" y="13" font-family="Liberation Sans" font-weight="bold" font-size="7.500" fill="#e86020">3</text><text x="6.300" y="13" font-family="Liberation Sans" font-weight="bold" font-size="7.500" fill="#2878d8">2</text><text x="10.300" y="13" font-family="Liberation Sans" font-weight="bold" font-size="7.500" fill="#30a040">1</text><rect x="1.500" y="14" width="13.500" height="1.500" fill="#505050"/></g></svg>
<svg class="a" style="left:304px;top:1035px" width="17" height="17" viewBox="0 0 17 17" ><defs><radialGradient id="bg1" cx=".45" cy=".4" r=".7"><stop offset="0" stop-color="#f8e4b0"/><stop offset=".7" stop-color="#e0a848"/><stop offset="1" stop-color="#b07818"/></radialGradient></defs><path d="M5 8.500c-1.500-.2-3 .3-4.300 1.700M4.300 10.500c-.8 1.300-.9 2.700-.3 4.200" stroke="#181818" stroke-width="1.300" fill="none" stroke-linecap="round"/><path d="M12.800 4.600c.8-.5 1.800-.3 2.700.5" stroke="#404040" stroke-width=".8" fill="none"/><ellipse cx="9.300" cy="11.800" rx="4" ry="4.500" fill="url(#bg1)" stroke="#5c4010" stroke-width=".6" transform="rotate(-18 9.300 11.800)"/><path d="M5.300 9.500c-.7 2.500 0 4.800 2.200 6.300" stroke="#201808" stroke-width="1.200" fill="none"/><path d="M6 8.300c1.500-1.200 4-1.300 6 .2l-.7 1.300c-1.500-.9-3.300-.9-4.800-.1z" fill="#f09818"/><circle cx="7.300" cy="4.200" r="3.300" fill="#fcfcfc" stroke="#c8c8c8" stroke-width=".5"/><circle cx="10.300" cy="6.300" r="2.500" fill="#fcfcfc" stroke="#c0c0c0" stroke-width=".5"/><circle cx="9.600" cy="2.700" r=".7" fill="#101010"/><circle cx="11.200" cy="5.400" r=".8" fill="#101010"/><path d="M3 2l1.500 1M2.800 4.500l1.300.3" stroke="#a0a0a0" stroke-width=".6"/></svg>
<svg class="a" style="left:342px;top:1035px" width="17" height="17" viewBox="0 0 17 17" ><defs><linearGradient id="npg" x1="0" y1="0" x2="1" y2="1"><stop offset="0" stop-color="#b8e4f4"/><stop offset="1" stop-color="#7cc4dc"/></linearGradient></defs><path d="M5 2h10.800l.3 13.600h-11.500z" fill="#b09868"/><path d="M4.500 1.800h11l.2 13.300h-11.500z" fill="#fffdf4"/><path d="M4.300 1.500h11l-1.800 12.500h-12.500z" fill="url(#npg)"/><path d="M3.900 3.500h11M3.500 5.200h11M3.100 6.900h11M2.700 8.600h11M2.300 10.300h11M1.900 12h11" stroke="#94d0e4" stroke-width=".7"/><path d="M5 .3v1.900M6.800 .3v1.900M8.600 .3v1.900M10.400 .3v1.900M12.200 .3v1.900M14 .3v1.900" stroke="#38506c" stroke-width=".9"/></svg>
<svg class="a" style="left:376px;top:1035px" width="17" height="17" viewBox="0 0 17 17" ><path d="M2 12.500l-1.500 1v2.500h15.500v-2.500l-1.500-1z" fill="#4888c8"/><rect x="3" y="14" width="10" height="1.200" fill="#f0f8ff"/><path d="M2 .3h12v1.500h-12z" fill="#3c80c4"/><path d="M2 1.500h12l1 11.500h-14z" fill="#eef6fe" stroke="#5c98d4" stroke-width=".6"/><path d="M4.200 8l1.800-4.800l1.800 4.800M4.900 6.400h2.300" stroke="#f88c18" stroke-width="1.300" fill="none"/><path d="M9 3.700h3.300M9 5.700h3.300" stroke="#4c8cdc" stroke-width="1"/><path d="M4 9.600h8.500M4 11.400h8.500" stroke="#a8b8cc" stroke-width=".8"/></svg>
<svg class="a" style="left:409px;top:1035px" width="16" height="17" viewBox="0 0 16 17" ><rect x="0" y=".5" width="15" height="15.200" fill="#c0c0c0"/><path d="M14.500 .5v15.200h-14.500" fill="none" stroke="#8c8c8c" stroke-width="1"/><path d="M2.300 12.300h3.200v-1.700c-1.600-.7-2.500-1.900-2.500-3.400 0-2 1.800-3.500 4.100-3.500s4.100 1.500 4.100 3.500c0 1.500-.9 2.700-2.500 3.400v1.700h3.200" fill="none" stroke="#181818" stroke-width="1.600"/></svg>
<svg class="a" style="left:444px;top:1035px" width="16" height="16" viewBox="0 0 16 16" ><rect x="0" y="0" width="16" height="15.700" fill="#fff"/><path d="M9 0h7v7z" fill="#b0b0b0"/><path d="M0 9v6.700h7z" fill="#b8b8b8"/><path d="M11.500 0h4.500v4.500z" fill="#989898"/><path d="M0 11.500v4.200h4.500z" fill="#a0a0a0"/><g stroke="#b00808" stroke-linecap="round" fill="none"><path d="M8 8.300L1.800 7.800" stroke-width="2.700"/><path d="M8 8.300L8.600 2" stroke-width="2.600"/><path d="M8 8.300L14 7.300" stroke-width="2.800"/><path d="M8 8.300L7.200 14" stroke-width="2.800"/><path d="M8 8.300L12.300 11.800" stroke-width="2.400"/><path d="M12.300 11.800c.8.600 1.600.5 2.200-.2" stroke-width="1.500"/></g><circle cx="8" cy="8.300" r="3.200" fill="#b00808"/><circle cx="12.600" cy="12" r="1.500" fill="#b00808"/><circle cx="2.800" cy="2.800" r="1.500" fill="#fff" stroke="#c01818" stroke-width="1"/><path d="M1.500 .8l.8 1M4.200 1l-.6.800" stroke="#c01818" stroke-width=".7"/></svg>
<div class="a " style="left:1737px;top:1032px;width:1px;height:22px;background:#808080;"></div>
<div class="a " style="left:1738px;top:1032px;width:1px;height:22px;background:#fff;"></div>
<div class="a " style="left:1741px;top:1032px;width:177px;height:46px;box-shadow:inset -1px -1px #fff,inset 1px 1px #808080;"></div>
<svg class="a" style="left:1750px;top:1036px" width="12" height="17" viewBox="0 0 12 17" ><rect x="2.300" y="1.800" width="8.700" height="13.900" rx="1" fill="#808080"/><rect x=".8" y=".6" width="8.800" height="13.700" rx="1" fill="#1c1c24"/><rect x="1.900" y="1.900" width="6.600" height="9.200" fill="#4090f0"/><rect x="2.400" y="2.800" width="5.600" height="5.600" fill="#e01818"/><path d="M3.400 3.800l3.600 3.600M7 3.800l-3.600 3.600" stroke="#fff" stroke-width="1.300"/><rect x="3" y="12.300" width="4.400" height=".8" fill="#505058"/></svg>
<svg class="a" style="left:1772px;top:1035px" width="17" height="17" viewBox="0 0 17 17" ><defs><radialGradient id="bg1" cx=".45" cy=".4" r=".7"><stop offset="0" stop-color="#f8e4b0"/><stop offset=".7" stop-color="#e0a848"/><stop offset="1" stop-color="#b07818"/></radialGradient></defs><path d="M5 8.500c-1.500-.2-3 .3-4.300 1.700M4.300 10.500c-.8 1.300-.9 2.700-.3 4.200" stroke="#181818" stroke-width="1.300" fill="none" stroke-linecap="round"/><path d="M12.800 4.600c.8-.5 1.800-.3 2.700.5" stroke="#404040" stroke-width=".8" fill="none"/><ellipse cx="9.300" cy="11.800" rx="4" ry="4.500" fill="url(#bg1)" stroke="#5c4010" stroke-width=".6" transform="rotate(-18 9.300 11.800)"/><path d="M5.300 9.500c-.7 2.500 0 4.800 2.200 6.300" stroke="#201808" stroke-width="1.200" fill="none"/><path d="M6 8.300c1.500-1.200 4-1.300 6 .2l-.7 1.300c-1.500-.9-3.300-.9-4.800-.1z" fill="#f09818"/><circle cx="7.300" cy="4.200" r="3.300" fill="#fcfcfc" stroke="#c8c8c8" stroke-width=".5"/><circle cx="10.300" cy="6.300" r="2.500" fill="#fcfcfc" stroke="#c0c0c0" stroke-width=".5"/><circle cx="9.600" cy="2.700" r=".7" fill="#101010"/><circle cx="11.200" cy="5.400" r=".8" fill="#101010"/><path d="M3 2l1.500 1M2.800 4.500l1.300.3" stroke="#a0a0a0" stroke-width=".6"/></svg>
<svg class="a" style="left:1795px;top:1036px" width="18" height="17" viewBox="0 0 18 17" ><path d="M1.500 5.500h2.500l4.500-4.500v14l-4.500-4.500h-2.500z" fill="#f4f4f4" stroke="#808080" stroke-width="1"/><path d="M4.200 5.500v5" stroke="#a0a0a0" stroke-width=".8"/><circle cx="12" cy="11" r="4.300" fill="#e01818"/><circle cx="12" cy="11" r="2.700" fill="#fff"/><path d="M10 9l4 4" stroke="#e01818" stroke-width="1.500"/></svg>
<svg class="a" style="left:1747px;top:1057px" width="18" height="18" viewBox="0 0 18 18" ><defs><linearGradient id="ng" x1="1" y1="0" x2="0" y2="1"><stop offset="0" stop-color="#787878"/><stop offset="1" stop-color="#c8c8c4"/></linearGradient></defs><rect x="6" y="3" width="10.800" height="10.600" fill="#fcfcfc" stroke="#787878" stroke-width=".7"/><rect x="7.300" y="4.300" width="8.200" height="7.900" fill="url(#ng)"/><rect x="9.800" y="13.600" width="3.200" height="1.400" fill="#b8b8b8"/><rect x="6.800" y="14.800" width="9.200" height="1.500" fill="#fcfcfc" stroke="#888" stroke-width=".5"/><path d="M3.900 8v8.700" stroke="#505050" stroke-width="2.800"/><path d="M3.900 8v8.700" stroke="#fcfcfc" stroke-width="1.500"/><rect x="1.400" y="1" width="1.500" height="3.600" fill="#fcfcfc" stroke="#606060" stroke-width=".6"/><rect x="4.900" y="1" width="1.500" height="3.600" fill="#fcfcfc" stroke="#606060" stroke-width=".6"/><path d="M.9 4.300h6v2.300l-1.500 2.200h-3l-1.500-2.200z" fill="#fcfcfc" stroke="#505050" stroke-width=".8"/></svg>
<svg class="a" style="left:1771px;top:1057px" width="18" height="18" viewBox="0 0 18 18" ><rect x="1.500" y="1.300" width="1.900" height="15.400" rx=".8" fill="#f8f8f8" stroke="#787878" stroke-width=".7"/><path d="M3.600 2.200c2-.7 3.800-.5 5.400.6 2 1.300 4.200 1.500 7.400.8v6.400c-2.800.8-5.200.5-7.200-.8-1.800-1.200-3.600-1.300-5.600-.6z" fill="#fafafa" stroke="#a0a0a0" stroke-width=".7"/><path d="M9.200 3v6.200" stroke="#d0d0d0" stroke-width=".8"/><circle cx="12.100" cy="12" r="4.700" fill="#e02020"/><circle cx="12.100" cy="12" r="4.700" fill="none" stroke="#f08080" stroke-width=".6"/><path d="M10 9.900l4.200 4.200M14.200 9.900l-4.200 4.200" stroke="#fff" stroke-width="1.800"/></svg>
<svg class="a" style="left:1900px;top:1049px" width="17" height="13" viewBox="0 0 17 13" ><defs><linearGradient id="dg" x1="0" y1="0" x2="1" y2="0"><stop offset="0" stop-color="#2860d0"/><stop offset=".6" stop-color="#4c98ec"/><stop offset="1" stop-color="#2c70d8"/></linearGradient></defs><rect x=".5" y=".5" width="15.500" height="12" fill="url(#dg)" stroke="#98c0ec"/><rect x="1" y="9.800" width="14.500" height="2.200" fill="#182848"/><rect x="1.500" y="9.500" width="2.600" height="2.600" rx="1" fill="#58a0e8"/><rect x="2.200" y="10.200" width="1.200" height="1.200" fill="#f8a020"/></svg>
<span id="t0" class="t" style="left:19.6px;transform:scaleX(1.0769);transform-origin:left center;top:4.00px;font-size:11px;font-weight:bold;color:#fff;">s30.lim - Limp</span>
<span id="t1" class="t" style="left:5.3px;transform:scaleX(0.9022);transform-origin:left center;top:23.00px;font-size:11px;font-weight:normal;color:#000;">File</span>
<span id="t2" class="t" style="left:33.3px;top:23.00px;font-size:11px;font-weight:normal;color:#000;">Overlay</span>
<span id="t3" class="t" style="left:83.3px;transform:scaleX(0.9647);transform-origin:left center;top:23.00px;font-size:11px;font-weight:normal;color:#000;">Edit</span>
<span id="t4" class="t" style="left:113.7px;transform:scaleX(0.9089);transform-origin:left center;top:23.00px;font-size:11px;font-weight:normal;color:#000;">View</span>
<span id="t5" class="t" style="left:147.5px;transform:scaleX(0.9501);transform-origin:left center;top:23.00px;font-size:11px;font-weight:normal;color:#000;">Record</span>
<span id="t6" class="t" style="left:193.3px;transform:scaleX(0.9739);transform-origin:left center;top:23.00px;font-size:11px;font-weight:normal;color:#000;">Setup</span>
<span id="t7" class="t" style="left:233.8px;transform:scaleX(0.9581);transform-origin:left center;top:23.00px;font-size:11px;font-weight:normal;color:#000;">Analyze</span>
<span id="t8" class="t" style="left:283.3px;transform:scaleX(0.9282);transform-origin:left center;top:23.00px;font-size:11px;font-weight:normal;color:#000;">Help</span>
<span id="t9" class="t" style="left:442px;transform:scaleX(1.0727);transform-origin:left center;top:48.00px;font-size:11px;font-weight:bold;color:#008080;-webkit-text-stroke:.35px #008080;">Mag</span>
<span id="t10" class="t" style="left:474.2px;transform:scaleX(1.0465);transform-origin:left center;top:48.00px;font-size:11px;font-weight:bold;color:#008080;-webkit-text-stroke:.35px #008080;">M<span style="color:#800000;-webkit-text-stroke:.2px #800000;font-size:10px">+</span>P</span>
<span id="t11" class="t" style="left:11.7px;transform:scaleX(0.8799);transform-origin:left center;top:78.00px;font-size:11px;font-weight:normal;color:#000;">Gen</span>
<span id="t12" class="t" style="left:38.3px;transform:scaleX(0.9536);transform-origin:left center;top:79.00px;font-size:11px;font-weight:normal;color:#000;">Stepped Sine</span>
<span id="t13" class="t" style="left:146.3px;top:78.00px;font-size:11px;font-weight:normal;color:#000;">Fstart(Hz)</span>
<span id="t14" class="t" style="right:1675.4px;top:78.00px;font-size:11px;font-weight:normal;color:#000;">20</span>
<span id="t15" class="t" style="left:286.3px;transform:scaleX(0.9776);transform-origin:left center;top:76.00px;font-size:11px;font-weight:normal;color:#000;">Fstop(Hz)</span>
<span id="t16" class="t" style="right:1540.3px;top:78.00px;font-size:11px;font-weight:normal;color:#000;">20000</span>
<span id="t17" class="t" style="left:414.5px;top:78.00px;font-size:11px;font-weight:normal;color:#000;">Avg</span>
<span id="t18" class="t" style="left:443.3px;transform:scaleX(0.9697);transform-origin:left center;top:79.00px;font-size:11px;font-weight:normal;color:#808080;text-shadow:1px 1px #fff;">None</span>
<span id="t19" class="t" style="left:544px;transform:translateX(-50%) scaleX(0.9913);transform-origin:center center;top:78.00px;font-size:11px;font-weight:normal;color:#000;">Reset</span>
<span id="t20" class="t" style="left:1886.4px;transform:scaleX(0.9624);transform-origin:left center;top:114.00px;font-size:11px;font-weight:normal;color:#000;">Max</span>
<span id="t21" class="t" style="left:1895.6px;transform:translateX(-50%) scaleX(1.0626);transform-origin:center center;top:183.00px;font-size:11px;font-weight:normal;color:#000;">Fit</span>
<span id="t22" class="t" style="left:1886.4px;transform:scaleX(0.9135);transform-origin:left center;top:210.00px;font-size:11px;font-weight:normal;color:#000;">Min</span>
<span id="t23" class="t" style="left:1895.6px;transform:translateX(-50%) scaleX(1.0475);transform-origin:center center;top:278.00px;font-size:11px;font-weight:normal;color:#000;">Set</span>
<span id="t24" class="t" style="left:1879.4px;transform:scaleX(0.9450);transform-origin:left center;top:309.00px;font-size:11px;font-weight:normal;color:#000;">FrHigh</span>
<span id="t25" class="t" style="left:1882.3px;transform:scaleX(0.9489);transform-origin:left center;top:354.00px;font-size:11px;font-weight:normal;color:#000;">FrLow</span>
<span id="t26" class="t" style="left:1.2px;transform:scaleX(1.0064);transform-origin:left center;top:1015.00px;font-size:11px;font-weight:normal;color:#000;">Ready</span>
<span id="t27" class="t" style="left:1762px;transform:scaleX(1.0279);transform-origin:left center;top:1015.00px;font-size:11px;font-weight:normal;color:#000;">L:-100.0</span>
<span id="t28" class="t" style="left:1820px;transform:scaleX(1.0307);transform-origin:left center;top:1015.00px;font-size:11px;font-weight:normal;color:#000;">R:-100.0</span>
<span id="t29" class="t" style="left:1878.3px;transform:scaleX(0.8831);transform-origin:left center;top:1015.00px;font-size:11px;font-weight:normal;color:#000;">dBFS</span>
<span id="t30" class="t" style="right:1847.4px;top:148.00px;font-size:17px;font-weight:normal;color:#000;">50.0</span>
<span id="t31" class="t" style="right:1847.4px;top:227.00px;font-size:17px;font-weight:normal;color:#000;">45.0</span>
<span id="t32" class="t" style="right:1847.4px;top:307.00px;font-size:17px;font-weight:normal;color:#000;">40.0</span>
<span id="t33" class="t" style="right:1847.4px;top:386.00px;font-size:17px;font-weight:normal;color:#000;">35.0</span>
<span id="t34" class="t" style="right:1847.4px;top:466.00px;font-size:17px;font-weight:normal;color:#000;">30.0</span>
<span id="t35" class="t" style="right:1847.4px;top:545.00px;font-size:17px;font-weight:normal;color:#000;">25.0</span>
<span id="t36" class="t" style="right:1847.4px;top:625.00px;font-size:17px;font-weight:normal;color:#000;">20.0</span>
<span id="t37" class="t" style="right:1847.4px;top:704.00px;font-size:17px;font-weight:normal;color:#000;">15.0</span>
<span id="t38" class="t" style="right:1847.4px;top:784.00px;font-size:17px;font-weight:normal;color:#000;">10.0</span>
<span id="t39" class="t" style="right:1847.4px;top:863.00px;font-size:17px;font-weight:normal;color:#000;">5.0</span>
<span id="t40" class="t" style="right:1847.4px;top:943.00px;font-size:17px;font-weight:normal;color:#000;">0.0</span>
<span id="t41" class="t" style="right:80.40000000000009px;top:148.00px;font-size:17px;font-weight:normal;color:#000;">90.0</span>
<span id="t42" class="t" style="right:80.40000000000009px;top:227.00px;font-size:17px;font-weight:normal;color:#000;">45.0</span>
<span id="t43" class="t" style="left:1810.3px;top:307.00px;font-size:17px;font-weight:normal;color:#000;">0.0</span>
<span id="t44" class="t" style="right:80.40000000000009px;top:386.00px;font-size:17px;font-weight:normal;color:#000;">-45.0</span>
<span id="t45" class="t" style="right:80.40000000000009px;top:466.00px;font-size:17px;font-weight:normal;color:#000;">-90.0</span>
<span id="t46" class="t" style="left:78.3px;transform:translateX(-50%) scaleX(1.0000);transform-origin:center center;top:961.00px;font-size:17px;font-weight:normal;color:#000;">20</span>
<span id="t47" class="t" style="left:306.3px;transform:translateX(-50%) scaleX(1.0000);transform-origin:center center;top:961.00px;font-size:17px;font-weight:normal;color:#000;">50</span>
<span id="t48" class="t" style="left:478.3px;transform:translateX(-50%) scaleX(1.0000);transform-origin:center center;top:961.00px;font-size:17px;font-weight:normal;color:#000;">100</span>
<span id="t49" class="t" style="left:650.3px;transform:translateX(-50%) scaleX(1.0000);transform-origin:center center;top:961.00px;font-size:17px;font-weight:normal;color:#000;">200</span>
<span id="t50" class="t" style="left:878.3px;transform:translateX(-50%) scaleX(1.0000);transform-origin:center center;top:961.00px;font-size:17px;font-weight:normal;color:#000;">500</span>
<span id="t51" class="t" style="left:1050.3px;transform:translateX(-50%) scaleX(1.0000);transform-origin:center center;top:961.00px;font-size:17px;font-weight:normal;color:#000;">1k</span>
<span id="t52" class="t" style="left:1222.3px;transform:translateX(-50%) scaleX(1.0000);transform-origin:center center;top:961.00px;font-size:17px;font-weight:normal;color:#000;">2k</span>
<span id="t53" class="t" style="left:1450.3px;transform:translateX(-50%) scaleX(1.0000);transform-origin:center center;top:961.00px;font-size:17px;font-weight:normal;color:#000;">5k</span>
<span id="t54" class="t" style="left:1622.3px;transform:translateX(-50%) scaleX(1.0000);transform-origin:center center;top:961.00px;font-size:17px;font-weight:normal;color:#000;">10k</span>
<span id="t55" class="t" style="left:1794.3px;transform:translateX(-50%) scaleX(1.0000);transform-origin:center center;top:961.00px;font-size:17px;font-weight:normal;color:#000;">20k</span>
<span id="t56" class="t" style="left:79.1px;transform:scaleX(1.0250);transform-origin:left center;top:131.00px;font-size:20px;font-weight:normal;color:#000;">|Z| (ohm)</span>
<span id="t57" class="t" style="left:936px;transform:translateX(-50%) scaleX(0.9852);transform-origin:center center;top:131.00px;font-size:20px;font-weight:normal;color:#000;">Impedance</span>
<span id="t58" class="t" style="right:127px;transform:scaleX(1.0204);transform-origin:right center;top:132.00px;font-size:20px;font-weight:normal;color:#000;">Phase (°)</span>
<span id="t59" class="t" style="left:1800px;top:555.00px;font-size:16px;font-weight:normal;color:#000;">Avg:1</span>
<span id="t60" class="t" style="left:1799.7px;top:877.00px;font-size:16px;font-weight:normal;color:#000;">L</span>
<span id="t61" class="t" style="left:1799.7px;top:894.00px;font-size:16px;font-weight:normal;color:#000;">I</span>
<span id="t62" class="t" style="left:1799.7px;top:911.00px;font-size:16px;font-weight:normal;color:#000;">M</span>
<span id="t63" class="t" style="left:1799.7px;top:928.00px;font-size:16px;font-weight:normal;color:#000;">P</span>
<span id="t64" class="t" style="right:125.59999999999991px;transform:scaleX(1.0354);transform-origin:right center;top:987.00px;font-size:16px;font-weight:normal;color:#000;">F(Hz)</span>
<span id="t65" class="t" style="left:78.2px;transform:scaleX(1.0316);transform-origin:left center;top:987.00px;font-size:16px;font-weight:normal;color:#000;">Cursor: 39.39 Hz, 12.54 Ohm, 21.9 deg</span>
<span id="t66" class="t" style="left:21px;transform:scaleX(1.1232);transform-origin:left center;top:1038.00px;font-size:11px;font-weight:bold;color:#000;-webkit-text-stroke:.3px #000;">Пуск</span>
<span id="t67" class="t" style="left:1716.9px;transform:scaleX(0.9177);transform-origin:left center;top:1037.00px;font-size:12px;font-weight:normal;color:#000;">EN</span>
<span id="t68" class="t" style="left:1859.1px;transform:translateX(-50%) scaleX(1.0098);transform-origin:center center;top:1041.00px;font-size:11px;font-weight:normal;color:#000;">14:49</span>
<span id="t69" class="t" style="left:1859.6px;transform:translateX(-50%) scaleX(1.0170);transform-origin:center center;top:1060.00px;font-size:11px;font-weight:normal;color:#000;">12.02.2024</span>
</body></html>
